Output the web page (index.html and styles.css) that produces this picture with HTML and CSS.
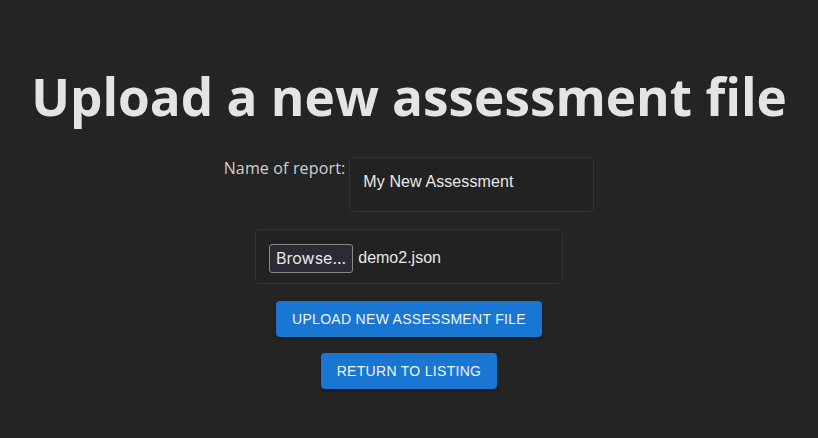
FILE: index.html
```html
<!DOCTYPE html>
<html>
<head>
<meta charset="utf-8">
<link rel="stylesheet" href="styles.css">
</head>
<body>
<main class="page">
  <h1 class="title">Upload a new assessment file</h1>
  <div class="row">
    <label class="label">Name of report:</label>
    <div class="field"><span class="field-text">My New Assessment</span></div>
  </div>
  <div class="filebox">
    <span class="browse">Browse...</span>
    <span class="filename">demo2.json</span>
  </div>
  <button class="btn">UPLOAD NEW ASSESSMENT FILE</button>
  <button class="btn">RETURN TO LISTING</button>
</main>
</body>
</html>
```
FILE: styles.css
```css
html, body {
  margin: 0;
  padding: 0;
  background: #242424;
  height: 100%;
}
.page {
  display: flex;
  flex-direction: column;
  align-items: center;
  padding-top: 61px;
}
.title {
  margin: 0;
  font-family: "Open Sans", sans-serif;
  font-weight: 700;
  font-size: 51.3px;
  line-height: 70px;
  color: #e4e4e4;
  white-space: nowrap;
}
.row {
  display: flex;
  align-items: flex-start;
  margin-top: 26px;
}
.label {
  font-family: "Open Sans", sans-serif;
  font-size: 16px;
  letter-spacing: 0.15px;
  color: #d0d0d0;
  margin-right: 4px;
}
.field {
  width: 245px;
  height: 55px;
  border: 1px solid #333;
  border-radius: 4px;
  background: #222;
  box-sizing: border-box;
  padding: 15px 13px;
}
.field-text {
  font-family: "Liberation Sans", Arial, sans-serif;
  font-size: 16px;
  letter-spacing: 0.1px;
  color: #e8e8e8;
}
.filebox {
  margin-top: 17px;
  width: 308px;
  height: 55px;
  border: 1px solid #333;
  border-radius: 4px;
  background: #222;
  box-sizing: border-box;
  display: flex;
  align-items: center;
  padding-left: 13px;
  padding-top: 3px;
  gap: 5px;
}
.browse {
  font-family: Inter, sans-serif;
  font-size: 16px;
  color: #e8e8e8;
  background: #2b2b36;
  border: 1px solid #888;
  border-radius: 3px;
  padding: 3px 6px 4px 6px;
}
.filename {
  font-family: "Liberation Sans", Arial, sans-serif;
  font-size: 16px;
  color: #e8e8e8;
}
.btn {
  margin-top: 17px;
  height: 36px;
  padding: 0 16px;
  border: none;
  border-radius: 4px;
  background: #1976d2;
  color: #f0f4fa;
  font-family: "Liberation Sans", Arial, sans-serif;
  font-size: 14px;
  letter-spacing: 0.3px;
  box-shadow: 0 2px 3px rgba(0,0,0,0.35);
}
.btn + .btn {
  margin-top: 16px;
}
```
